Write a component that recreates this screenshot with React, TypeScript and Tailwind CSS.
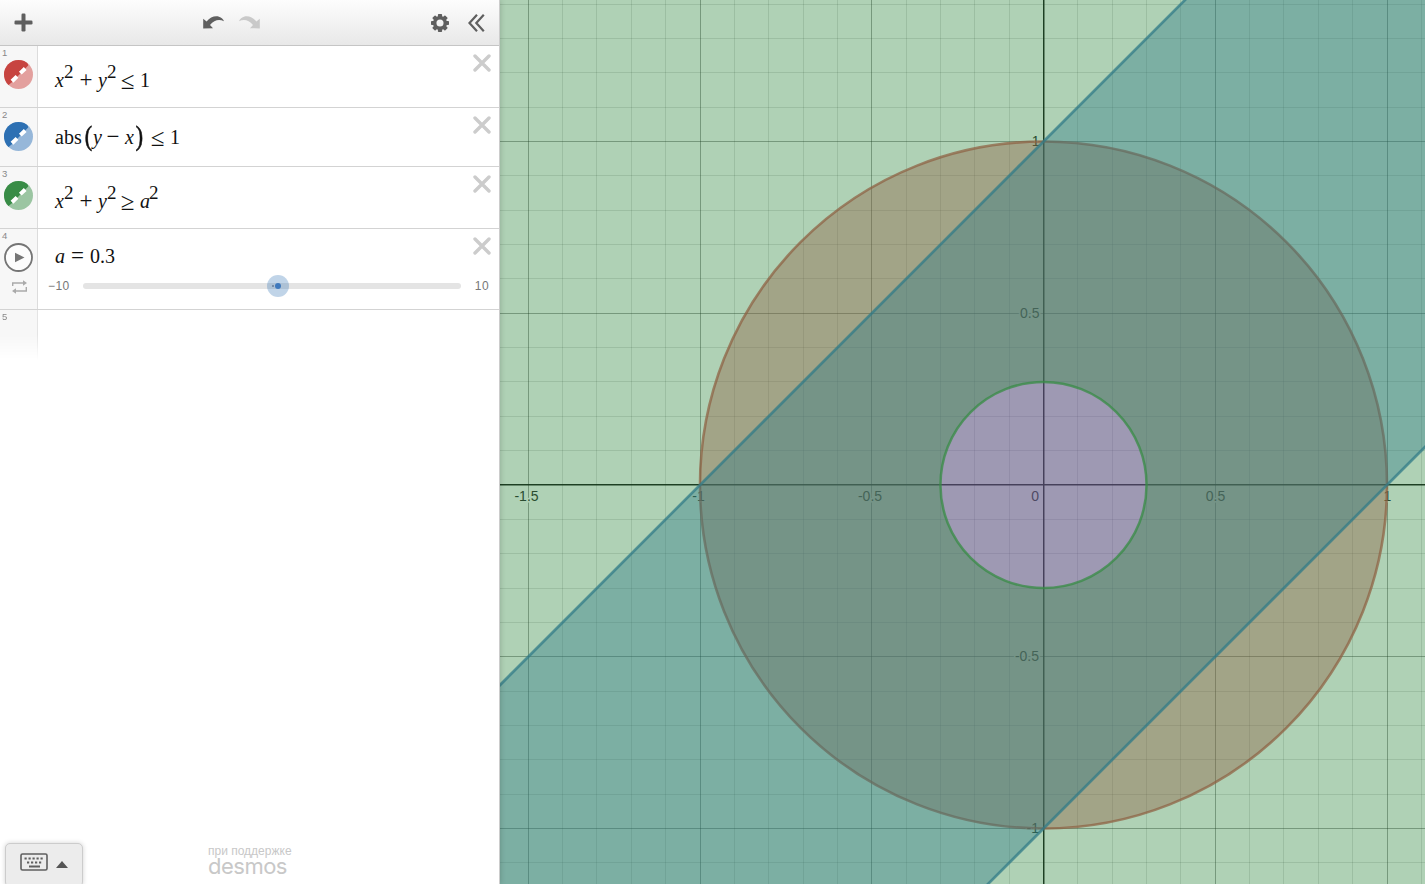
import React from "react";

const OX = 543.5;
const OY = 485;
const UNIT = 343.5;
const range = (a: number, b: number) => Array.from({ length: b - a + 1 }, (_, i) => a + i);

function Graph() {
  const xs = range(-15, 11);
  const ys = range(-14, 11);
  const minor = UNIT / 10;
  const labels: [string, number, number, "middle" | "end"][] = [
    ["-1.5", 26.5, 501, "middle"],
    ["-1", 198.5, 501, "middle"],
    ["-0.5", 370, 501, "middle"],
    ["0", 539, 501, "end"],
    ["0.5", 715.5, 501, "middle"],
    ["1", 887.5, 501, "middle"],
    ["1", 539.5, 146, "end"],
    ["0.5", 539.5, 318, "end"],
    ["-0.5", 539, 661, "end"],
    ["-1", 539, 833, "end"],
  ];
  return (
    <svg className="block h-[884px] w-[925px]" viewBox="0 0 925 884">
      <rect width="925" height="884" fill="#fff" />
      <g shapeRendering="crispEdges">
        {xs.map((i) => (
          <rect key={i} x={Math.floor(OX + i * minor)} y="0" width="1" height="884" fill="#000" opacity={i % 5 ? 0.12 : 0.37} />
        ))}
        {ys.map((i) => (
          <rect key={i} x="0" y={Math.round(OY - 0.5 + i * minor - 0.01)} width="925" height="1" fill="#000" opacity={i % 5 ? 0.12 : 0.37} />
        ))}
      </g>
      <path d="M543.75 0V884M0 484.75H925" stroke="#000" strokeWidth="1.5" strokeOpacity="0.92" />
      <g fontFamily="Liberation Sans, Arial, sans-serif" fontSize="14" fill="#222" stroke="#fff" strokeWidth="3" paintOrder="stroke">
        {labels.map(([t, x, y, a], i) => (
          <text key={i} x={x} y={y} textAnchor={a}>{t}</text>
        ))}
      </g>
      <circle cx={OX} cy={OY} r={UNIT} fill="#c74440" fillOpacity="0.4" />
      <circle cx={OX} cy={OY} r={UNIT} fill="none" stroke="#c74440" strokeWidth="2.6" strokeOpacity="0.72" />
      <path d={`M-300 ${OY + 843.5 - UNIT}L800 ${OY - 256.5 - UNIT}L1500 ${OY - 956.5 + UNIT}L-100 ${OY + 643.5 + UNIT}Z`} fill="#2d70b3" fillOpacity="0.4" stroke="#2d70b3" strokeWidth="2.7" strokeOpacity="0.75" />
      <path d={`M0 0H925V884H0ZM${OX - UNIT * 0.3} ${OY}a${UNIT * 0.3} ${UNIT * 0.3} 0 1 0 ${UNIT * 0.6} 0a${UNIT * 0.3} ${UNIT * 0.3} 0 1 0 ${-UNIT * 0.6} 0Z`} fill="#388c46" fillOpacity="0.4" fillRule="evenodd" />
      <circle cx={OX} cy={OY} r={UNIT * 0.3} fill="none" stroke="#388c46" strokeWidth="2.5" strokeOpacity="0.75" />
    </svg>
  );
}

function ColorIcon({ color, light }: { color: string; light: string }) {
  return (
    <svg className="mt-[14px] ml-1 block size-[29px] overflow-hidden rounded-full" viewBox="0 0 29 29">
      <rect width="29" height="29" fill={light} />
      <path d="M0 0H23L24.2 5.6L7.6 22.6L4 25.5L0 29Z" fill={color} />
      <path d="M8 21.2L13 16.4M16.3 13.1L21.2 8.5" stroke="#fff" strokeWidth="4" />
    </svg>
  );
}

const Close = () => (
  <svg className="mt-[8px] mr-[8px] size-[18px] shrink-0" viewBox="0 0 18 18" fill="none" stroke="#ccc" strokeWidth="3.4" strokeLinecap="round">
    <path d="M2 2L16 16M16 2L2 16" />
  </svg>
);

const Sup = () => <span className="relative top-[-9px] -left-px w-[11px] text-[19px]">2</span>;
const V = ({ children }: { children: React.ReactNode }) => <i className="w-[10px]">{children}</i>;
const Op = ({ children }: { children: React.ReactNode }) => <span className="relative -left-px w-[22px] text-center text-[23px]">{children}</span>;
const Rel = ({ children }: { children: React.ReactNode }) => <span className="relative top-[2px] -left-[2px] w-[21px] text-center text-[25px]">{children}</span>;
const Paren = ({ children }: { children: React.ReactNode }) => <span className="w-[9px] origin-center scale-y-[1.2] text-center text-[22px] [-webkit-text-stroke:0.5px_#111]">{children}</span>;

function Row({ n, h, icon, children }: { n: number; h: string; icon: React.ReactNode; children: React.ReactNode }) {
  return (
    <div className={`flex ${h} border-b border-[#d3d3d3]`}>
      <div className="relative w-[38px] shrink-0 border-r border-[#dcdcdc] bg-[#f7f7f7]">
        <span className="absolute top-px left-[2px] text-[9.5px] leading-[12px] text-[#888]">{n}</span>
        {icon}
      </div>
      <div className="min-w-0 flex-1 font-['Liberation_Serif',serif] text-[20px] leading-6 whitespace-nowrap text-[#111]">{children}</div>
      <Close />
    </div>
  );
}

export default function App() {
  return (
    <div className="flex h-[884px] w-[1425px] overflow-hidden bg-white font-['Liberation_Sans',Arial,sans-serif]">
      <aside className="relative z-10 flex w-[500px] shrink-0 flex-col border-r border-[#ccc] bg-white shadow-[0_0_6px_rgba(0,0,0,.2)]">
        <header className="flex h-[46px] shrink-0 items-center border-b border-[#c5c5c5] bg-linear-to-b from-[#fdfdfd] to-[#e8e8e8]">
          <svg className="ml-[14px] size-[19px]" viewBox="0 0 19 19" fill="#5f5f5f"><rect x="7.5" y="0.5" width="4" height="18" rx="1.2" /><rect x="0.5" y="7.5" width="18" height="4" rx="1.2" /></svg>
          <svg className="ml-[170px] h-[13px] w-[22px]" viewBox="0 0 22 13" fill="#5f5f5f"><path d="M.2 2.8L3.6 5.6C7 1.2 12-.6 16 .7C18.5 1.5 20.2 3 21 5.2C16 2.7 11.3 3.9 7 9L10 12.2L.2 12.4Z" /></svg>
          <svg className="ml-[14px] h-[13px] w-[22px]" viewBox="0 0 22 13" fill="#c9c9c9"><path d="M20.8 2.8L17.4 5.6C14 1.2 9-.6 5 .7C2.5 1.5 .8 3 0 5.2C5 2.7 9.7 3.9 14 9L11 12.2L20.8 12.4Z" /></svg>
          <svg className="ml-[170px] size-[18px]" viewBox="-9 -9 18 18" fill="#5f5f5f">
            {range(0, 7).map((i) => <rect key={i} x="-2.1" y="-9" width="4.2" height="5" rx="0.8" transform={`rotate(${i * 45})`} />)}
            <circle r="5.3" fill="none" stroke="#5f5f5f" strokeWidth="3.5" />
          </svg>
          <svg className="ml-[19px] h-[18px] w-[17px]" viewBox="0 0 17 18" fill="none" stroke="#5f5f5f" strokeWidth="2.2"><path d="M9 .8L1.5 9L9 17.2M15.8 .8L8.3 9L15.8 17.2" /></svg>
        </header>

        <Row n={1} h="h-[62px]" icon={<ColorIcon color="#c74440" light="#e3a09e" />}>
          <div className="flex items-baseline pt-[21px] pl-[17px]"><V>x</V><Sup /><Op>+</Op><V>y</V><Sup /><Rel>≤</Rel><span>1</span></div>
        </Row>
        <Row n={2} h="h-[59px]" icon={<ColorIcon color="#2d70b3" light="#96b7d9" />}>
          <div className="flex items-baseline pt-[16px] pl-[17px]"><span className="w-[29px]">abs</span><Paren>(</Paren><V>y</V><Op>−</Op><V>x</V><Paren>)</Paren><span className="w-[5px]" /><Rel>≤</Rel><span>1</span></div>
        </Row>
        <Row n={3} h="h-[62px]" icon={<ColorIcon color="#388c46" light="#9bc5a2" />}>
          <div className="flex items-baseline pt-[21px] pl-[17px]"><V>x</V><Sup /><Op>+</Op><V>y</V><Sup /><Rel>≥</Rel><V>a</V><Sup /></div>
        </Row>
        <Row n={4} h="h-[81px]" icon={
          <>
            <svg className="mt-[14px] ml-1 block size-[29px]" viewBox="0 0 29 29"><circle cx="14.5" cy="14.5" r="13.5" fill="#fcfcfc" stroke="#757575" strokeWidth="1.8" /><path d="M11 9.7L20.5 14.5L11 19.3Z" fill="#757575" /></svg>
            <svg className="mt-[8px] ml-[12px] block h-[14px] w-[15px]" viewBox="0 0 15 14" fill="none" stroke="#aaa" strokeWidth="1.4"><path d="M.7 6V3H12M14.3 7V11H3" /><path d="M11 .2L15 3L11 5.8ZM4 8.2L0 11L4 13.8Z" fill="#aaa" stroke="none" /></svg>
          </>
        }>
          <div className="flex h-10 items-baseline pt-[15px] pl-[17px]"><V>a</V><span className="w-[25px] text-center text-[23px]">=</span><span>0.3</span></div>
          <div className="-mr-4 mt-[10px] flex h-[14px] items-center pl-[10px] font-['Liberation_Sans',sans-serif] text-[12px] text-[#777]">
            <span className="w-[35px] tracking-[0.4px]">−10</span>
            <div className="relative h-[6px] w-[378px] rounded-full bg-[#e4e4e4]">
              <div className="absolute top-[-8px] left-[184px] flex size-[22px] items-center justify-center rounded-full bg-[#2d70b3]/30">
                <div className="size-[6px] rounded-full bg-[#3f79bd]" />
                <div className="absolute top-[10px] left-[5px] size-[2px] rounded-full bg-[#667b99]" />
              </div>
            </div>
            <span className="ml-[14px] tracking-[0.4px]">10</span>
          </div>
        </Row>
        <div className="h-[50px] w-[38px] shrink-0 border-r border-[#e4e4e4] bg-[#f7f7f7] mask-[linear-gradient(#000_50%,transparent)] pl-[2px] text-[9.5px] leading-[14px] text-[#888]">5</div>

        <footer className="mt-auto flex h-[41px] items-start">
          <button className="ml-[5px] flex h-[44px] w-[78px] items-start rounded-[5px] border border-[#ccc] bg-[#ececec] pt-[9px] pl-[14px] shadow-[0_0_5px_rgba(0,0,0,.18)]">
            <svg className="h-[18px] w-[28px]" viewBox="0 0 28 18"><rect x="1" y="1" width="26" height="16" rx="1.5" fill="none" stroke="#5f5f5f" strokeWidth="1.6" /><path d="M4.5 5.5H24M7 9.5H23" stroke="#5f5f5f" strokeWidth="2" strokeDasharray="2.2 1.8" /><path d="M9 13.5H20" stroke="#5f5f5f" strokeWidth="2" /></svg>
            <svg className="mt-[8px] ml-[8px] h-[7px] w-[12px]" viewBox="0 0 12 7"><path d="M0 7L6 0L12 7Z" fill="#555" /></svg>
          </button>
          <div className="ml-[125px] flex w-[84px] flex-col pt-[2px]">
            <span className="text-[12px] leading-[12px] whitespace-nowrap text-[#c8c8c8]">при поддержке</span>
            <span className="font-['Inter',sans-serif] text-[22px] leading-[19px] tracking-[-0.5px] text-[#c8c8c8]">desmos</span>
          </div>
        </footer>
      </aside>
      <main className="w-[925px] shrink-0"><Graph /></main>
    </div>
  );
}
